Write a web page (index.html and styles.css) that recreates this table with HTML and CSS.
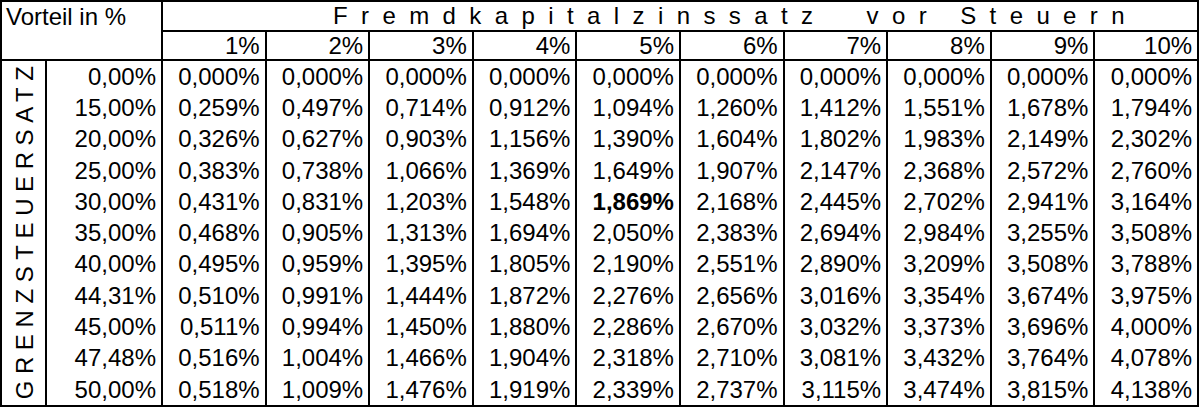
FILE: index.html
```html
<!DOCTYPE html>
<html>
<head>
<meta charset="utf-8">
<link rel="stylesheet" href="styles.css">
</head>
<body>
<table class="grid">
  <colgroup>
    <col class="c-label"><col class="c-rate">
    <col class="c-val"><col class="c-val"><col class="c-val"><col class="c-val"><col class="c-val">
    <col class="c-val"><col class="c-val"><col class="c-val"><col class="c-val"><col class="c-val">
  </colgroup>
  <thead>
    <tr class="h1">
      <th class="corner" colspan="2" rowspan="2">Vorteil in %</th>
      <th class="title" colspan="10"><span class="title-text">Fremdkapitalzinssatz  vor Steuern</span></th>
    </tr>
    <tr class="h2">
      <th>1%</th><th>2%</th><th>3%</th><th>4%</th><th>5%</th><th>6%</th><th>7%</th><th>8%</th><th>9%</th><th>10%</th>
    </tr>
  </thead>
  <tbody>
    <tr><td class="side" rowspan="11"><div class="vert">GRENZSTEUERSAT<span class="vert-last">Z</span></div></td><td class="rate">0,00%</td><td>0,000%</td><td>0,000%</td><td>0,000%</td><td>0,000%</td><td>0,000%</td><td>0,000%</td><td>0,000%</td><td>0,000%</td><td>0,000%</td><td>0,000%</td></tr>
    <tr><td class="rate">15,00%</td><td>0,259%</td><td>0,497%</td><td>0,714%</td><td>0,912%</td><td>1,094%</td><td>1,260%</td><td>1,412%</td><td>1,551%</td><td>1,678%</td><td>1,794%</td></tr>
    <tr><td class="rate">20,00%</td><td>0,326%</td><td>0,627%</td><td>0,903%</td><td>1,156%</td><td>1,390%</td><td>1,604%</td><td>1,802%</td><td>1,983%</td><td>2,149%</td><td>2,302%</td></tr>
    <tr><td class="rate">25,00%</td><td>0,383%</td><td>0,738%</td><td>1,066%</td><td>1,369%</td><td>1,649%</td><td>1,907%</td><td>2,147%</td><td>2,368%</td><td>2,572%</td><td>2,760%</td></tr>
    <tr><td class="rate">30,00%</td><td>0,431%</td><td>0,831%</td><td>1,203%</td><td>1,548%</td><td class="hl">1,869%</td><td>2,168%</td><td>2,445%</td><td>2,702%</td><td>2,941%</td><td>3,164%</td></tr>
    <tr><td class="rate">35,00%</td><td>0,468%</td><td>0,905%</td><td>1,313%</td><td>1,694%</td><td>2,050%</td><td>2,383%</td><td>2,694%</td><td>2,984%</td><td>3,255%</td><td>3,508%</td></tr>
    <tr><td class="rate">40,00%</td><td>0,495%</td><td>0,959%</td><td>1,395%</td><td>1,805%</td><td>2,190%</td><td>2,551%</td><td>2,890%</td><td>3,209%</td><td>3,508%</td><td>3,788%</td></tr>
    <tr><td class="rate">44,31%</td><td>0,510%</td><td>0,991%</td><td>1,444%</td><td>1,872%</td><td>2,276%</td><td>2,656%</td><td>3,016%</td><td>3,354%</td><td>3,674%</td><td>3,975%</td></tr>
    <tr><td class="rate">45,00%</td><td>0,511%</td><td>0,994%</td><td>1,450%</td><td>1,880%</td><td>2,286%</td><td>2,670%</td><td>3,032%</td><td>3,373%</td><td>3,696%</td><td>4,000%</td></tr>
    <tr><td class="rate">47,48%</td><td>0,516%</td><td>1,004%</td><td>1,466%</td><td>1,904%</td><td>2,318%</td><td>2,710%</td><td>3,081%</td><td>3,432%</td><td>3,764%</td><td>4,078%</td></tr>
    <tr><td class="rate">50,00%</td><td>0,518%</td><td>1,009%</td><td>1,476%</td><td>1,919%</td><td>2,339%</td><td>2,737%</td><td>3,115%</td><td>3,474%</td><td>3,815%</td><td>4,138%</td></tr>
  </tbody>
</table>
</body>
</html>
```

FILE: styles.css
```css
html, body {
  margin: 0;
  padding: 0;
  background: #ffffff;
}

.grid {
  border-collapse: collapse;
  table-layout: fixed;
  width: 1199px;
  font-family: "Liberation Sans", Arial, sans-serif;
  font-size: 24px;
  color: #000;
  border: 2px solid #000;
}

.c-label { width: 45px; }
.c-rate { width: 116px; }
.c-val { width: 103.6px; }

.grid th, .grid td {
  padding: 0 5px 0 0;
  font-weight: normal;
  text-align: right;
  line-height: 24px;
  white-space: nowrap;
  overflow: hidden;
}

.grid td {
  border-left: 2px solid #000;
  border-right: 2px solid #000;
  height: 31.3px;
}

.grid th {
  border: 2px solid #000;
}

.h1 th { height: 28px; }
.h2 th { height: 27px; }

.grid .corner {
  text-align: left;
  vertical-align: top;
  padding: 3px 0 0 4px;
}

.grid .title {
  text-align: left;
  padding-left: 170px;
}

.title-text {
  letter-spacing: 13.4px;
  white-space: pre;
}

.grid .side {
  padding: 0;
  vertical-align: middle;
  text-align: center;
}

.vert {
  writing-mode: vertical-rl;
  transform: rotate(180deg);
  letter-spacing: 6.6px;
  margin: 0 auto;
  line-height: 45px;
}

.vert-last {
  letter-spacing: 0;
}

.grid td.hl { font-weight: bold; }
```
